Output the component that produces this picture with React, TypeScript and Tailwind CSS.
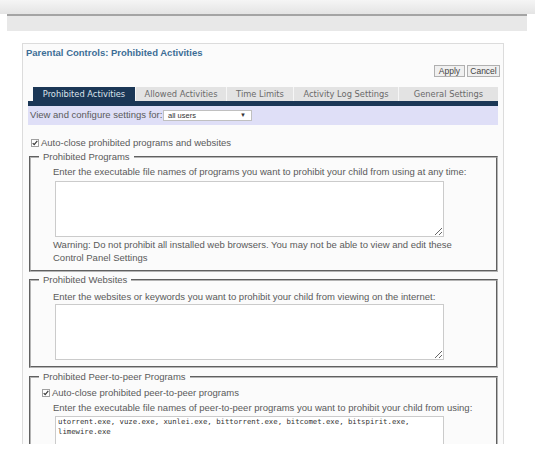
import React from "react";

const tabs = [
  { label: "Prohibited Activities", w: "w-[102px]" },
  { label: "Allowed Activities", w: "w-[91px]" },
  { label: "Time Limits", w: "w-[67px]" },
  { label: "Activity Log Settings", w: "w-[105px]" },
  { label: "General Settings", w: "w-[100px]" },
];

const p2pList =
  "utorrent.exe, vuze.exe, xunlei.exe, bittorrent.exe, bitcomet.exe, bitspirit.exe, limewire.exe";

function Checkbox() {
  return (
    <svg width="8" height="8" viewBox="0 0 8 8" className="shrink-0">
      <rect x="0.5" y="0.5" width="7" height="7" fill="#fff" stroke="#a0a0a0" />
      <path d="M1.7 4.1 L3.2 5.7 L6.3 1.9" fill="none" stroke="#3a3a3a" strokeWidth="1.2" />
    </svg>
  );
}

function Group({ title, children, className = "" }: { title: string; children: React.ReactNode; className?: string }) {
  return (
    <fieldset
      className={`ml-[6px] w-[469px] border-2 border-[#b4b4b4] [border-style:groove] pb-[6px] ${className}`}
    >
      <legend className="ml-[8px] px-[4px] leading-[12px]">{title}</legend>
      {children}
    </fieldset>
  );
}

function Box({ className = "", value }: { className?: string; value?: string }) {
  return (
    <textarea
      defaultValue={value}
      className={`block ml-[2px] w-[389px] bg-white border border-[#cbcbcb] outline-none ${className}`}
    />
  );
}

export default function App() {
  return (
    <div className="w-[535px] h-[455px] bg-white overflow-hidden font-['Liberation_Sans',Arial,sans-serif] text-[9.5px] text-[#5a5a5a]">
      <div className="h-[444px] overflow-hidden">
        {/* window chrome strip */}
        <div className="h-[14px] bg-linear-to-b from-[#f5f5f5] to-[#e4e4e4]" />
        <div className="ml-[7px] w-[520px] h-[17px] border-t-2 border-[#a4a4a4] bg-[#e8e8e8]" />

        <div className="ml-[22px] mt-[12px] w-[482px] h-[420px] border border-[#dcdcdc] bg-[#fbfbfb]">
          <div className="mt-[3px] pl-[3px] leading-[12px] font-bold text-[#3d6e96]">
            Parental Controls: Prohibited Activities
          </div>

          <div className="mt-[6px] pr-[3px] flex justify-end gap-[2px]">
            <button className="h-[12px] w-[31px] leading-[10px] text-[8.5px] text-[#444] bg-[#f0f0f0] border border-[#b0b0b0]">
              Apply
            </button>
            <button className="h-[12px] w-[33px] leading-[10px] text-[8.5px] text-[#444] bg-[#f0f0f0] border border-[#b0b0b0]">
              Cancel
            </button>
          </div>

          {/* tab strip */}
          <div className="mt-[10px] ml-[5px] w-[470px]">
            <div className="flex pl-[5px] h-[14px] font-['DejaVu_Sans',Verdana,sans-serif] text-[8.3px]">
              {tabs.map((t, i) =>
                i === 0 ? (
                  <div key={t.label} className={`${t.w} flex items-center justify-center bg-[#1b3756] text-[#dbe3ec]`}>
                    {t.label}
                  </div>
                ) : (
                  <div
                    key={t.label}
                    className={`${t.w} flex items-center justify-center bg-[#e3e3e3] text-[#6a6a6a] border-l border-[#f6f6f6]`}
                  >
                    {t.label}
                  </div>
                )
              )}
            </div>
            <div className="h-[5px] bg-[#1b3756]" />
            <div className="h-[19px] flex items-center pl-[2px] bg-[#dfdff7]">
              <span className="w-[133px]">View and configure settings for:</span>
              <div className="w-[89px] h-[11px] flex items-center justify-between pl-[4px] pr-[5px] bg-white border border-[#c0c0c0] text-[7.5px] text-[#333]">
                <span>all users</span>
                <span className="text-[6px]">▼</span>
              </div>
            </div>
          </div>

          <div className="mt-[12px] ml-[8px] h-[12px] flex items-center gap-[2px]">
            <Checkbox />
            <span>Auto-close prohibited programs and websites</span>
          </div>

          <Group title="Prohibited Programs" className="mt-[2px]">
            <div className="pl-[22px]">
              <div className="mt-[3px] leading-[12px]">
                Enter the executable file names of programs you want to prohibit your child from using at any time:
              </div>
              <Box className="mt-[3px] h-[56px]" />
              <div className="mt-[1px] leading-[13px]">
                Warning: Do not prohibit all installed web browsers. You may not be able to view and edit these
                <br />
                Control Panel Settings
              </div>
            </div>
          </Group>

          <Group title="Prohibited Websites" className="mt-[2px]">
            <div className="pl-[22px]">
              <div className="mt-[5px] leading-[12px]">
                Enter the websites or keywords you want to prohibit your child from viewing on the internet:
              </div>
              <Box className="mt-[1px] h-[56px]" />
            </div>
          </Group>

          <Group title="Prohibited Peer-to-peer Programs" className="mt-[3px]">
            <div className="mt-[4px] ml-[11px] h-[12px] flex items-center gap-[2px]">
              <Checkbox />
              <span>Auto-close prohibited peer-to-peer programs</span>
            </div>
            <div className="pl-[22px]">
              <div className="mt-[3px] leading-[12px]">
                Enter the executable file names of peer-to-peer programs you want to prohibit your child from using:
              </div>
              <Box
                value={p2pList}
                className="mt-[2px] h-[56px] px-[2px] py-0 font-['DejaVu_Sans_Mono','Liberation_Mono',monospace] text-[7.3px] leading-[10px] text-[#333]"
              />
            </div>
          </Group>
        </div>
      </div>
    </div>
  );
}
